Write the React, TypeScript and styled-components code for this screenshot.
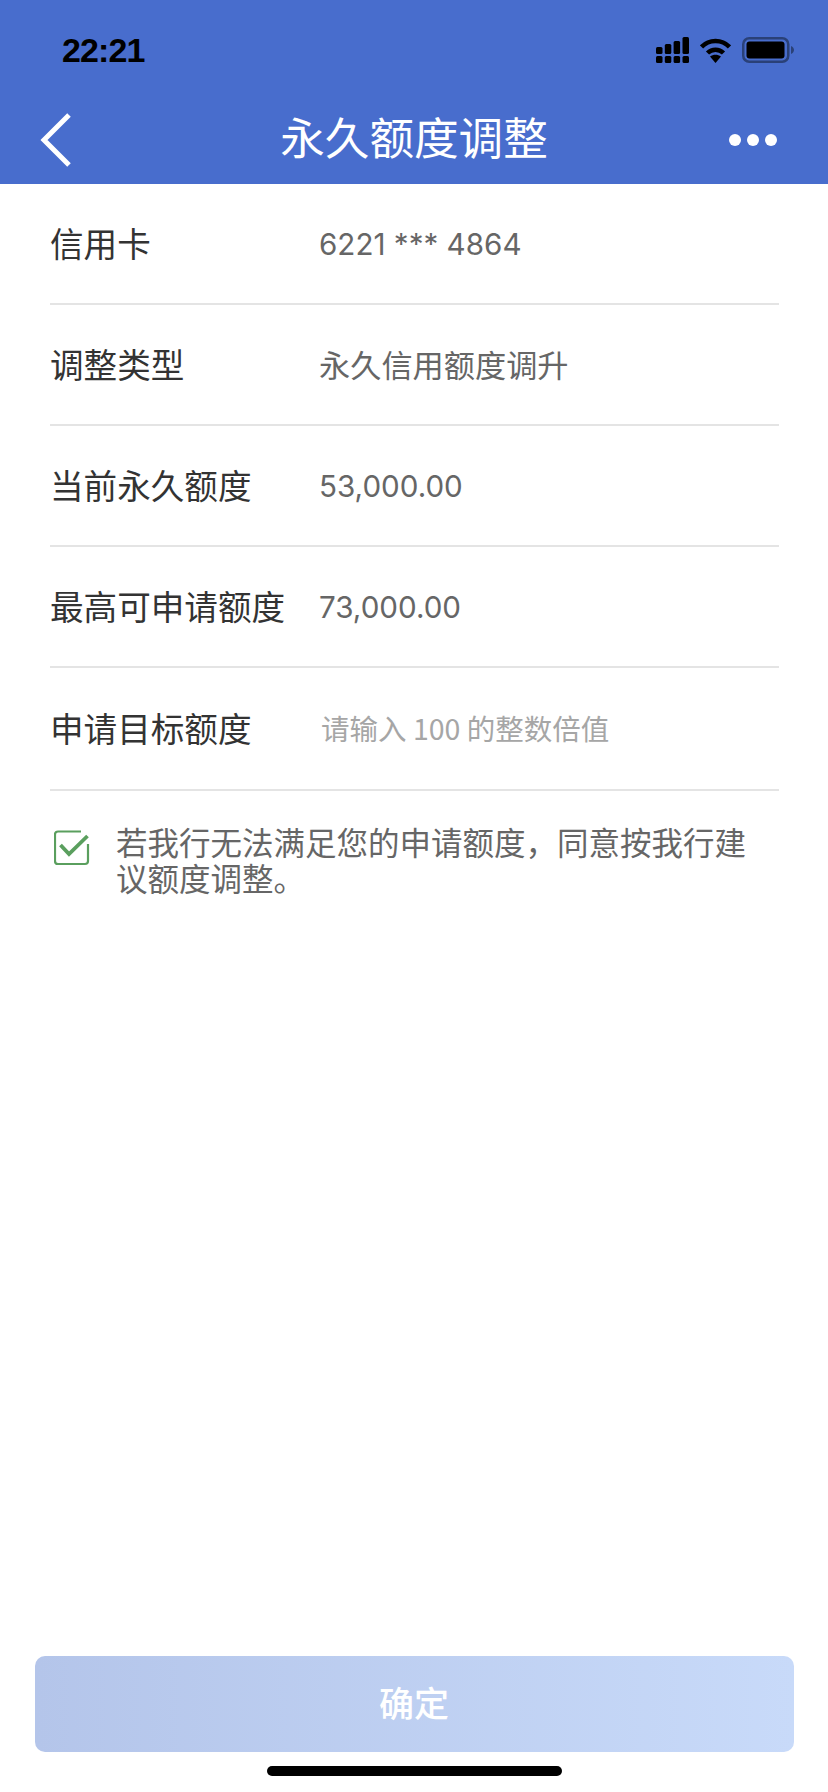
import styled, { createGlobalStyle } from 'styled-components';

const CJK = `"Noto Sans CJK SC", "Noto Sans", sans-serif`;

const GlobalStyle = createGlobalStyle`
    html, body {
        margin: 0;
        padding: 0;
        background: #ffffff;
    }
`;

const Page = styled.div`
    width: 828px;
    height: 1792px;
    display: flex;
    flex-direction: column;
    background: #ffffff;
    font-family: ${CJK};
    overflow: hidden;
`;

// Blue header with status bar and title
const Header = styled.header`
    height: 184px;
    flex-shrink: 0;
    display: flex;
    flex-direction: column;
    background: #486dcd;
`;

const StatusBar = styled.div`
    height: 50px;
    margin-top: 25px;
    display: flex;
    align-items: center;
    justify-content: space-between;
    padding: 0 34px 0 62px;
`;

const Clock = styled.span`
    font-family: "Liberation Sans", sans-serif;
    font-size: 34px;
    font-weight: 700;
    letter-spacing: -0.9px;
    color: #000000;
`;

const StatusIcons = styled.div`
    display: flex;
    align-items: center;
    gap: 11px;
`;

const NavBar = styled.div`
    flex: 1;
    display: grid;
    grid-template-columns: 1fr auto 1fr;
    align-items: center;
    padding: 20px 52px 0 40px;
`;

const BackIcon = styled.svg`
    display: block;
`;

const Title = styled.h1`
    margin: 0 0 8px 12px;
    font-size: 44.6px;
    font-weight: 400;
    line-height: 60px;
    color: #ffffff;
`;

const Dots = styled.div`
    display: flex;
    justify-content: flex-end;
    gap: 6px;
    margin-right: -1px;
`;

const Dot = styled.span`
    width: 12px;
    height: 12px;
    border-radius: 50%;
    background: #ffffff;
`;

const Form = styled.div`
    padding: 0 49px 0 50px;
`;

const Row = styled.div`
    height: 121px;
    box-sizing: border-box;
    display: flex;
    align-items: center;
    padding-bottom: 3px;
    border-bottom: 2px solid #e4e4e4;

    &:nth-child(5) {
        height: 123px;
    }
`;

const Label = styled.div`
    width: 269px;
    flex-shrink: 0;
    font-size: 33.6px;
    color: #333333;
    white-space: nowrap;
`;

const Value = styled.div<{ $kind?: string }>`
    font-family: ${(p) => (p.$kind === 'number' ? `Inter, ${CJK}` : CJK)};
    font-size: ${(p) => (p.$kind === 'number' ? '29.6px' : p.$kind === 'hint' ? '28.5px' : '31.2px')};
    color: ${(p) => (p.$kind === 'hint' ? '#a6a6a6' : '#666666')};
    margin-left: ${(p) => (p.$kind === 'hint' ? '2px' : '0')};
    padding-top: ${(p) => (p.$kind === 'number' ? '3px' : '0')};
    white-space: nowrap;
`;

const Agreement = styled.div`
    display: flex;
    align-items: flex-start;
    gap: 26px;
    padding: 32px 20px 0 4px;
`;

const AgreementText = styled.div`
    font-size: 31.5px;
    line-height: 36px;
    color: #666666;
`;

const CheckIcon = styled.svg`
    width: 36px;
    height: 36px;
    flex-shrink: 0;
    margin-top: 7px;
`;

const Footer = styled.div`
    margin-top: auto;
    display: flex;
    flex-direction: column;
    align-items: center;
`;

const ConfirmButton = styled.button`
    width: 759px;
    height: 96px;
    border: 0;
    border-radius: 10px;
    padding: 0 0 6px;
    background: linear-gradient(90deg, #b4c5ea 0%, #c8daf9 100%);
    font-family: ${CJK};
    font-size: 35px;
    font-weight: 500;
    color: #ffffff;
`;

const HomeBar = styled.div`
    width: 295px;
    height: 10px;
    margin: 14px 0 16px;
    border-radius: 5px;
    background: #000000;
`;

const rows = [
    { label: '信用卡', value: '6221 *** 4864', kind: 'number' },
    { label: '调整类型', value: '永久信用额度调升' },
    { label: '当前永久额度', value: '53,000.00', kind: 'number' },
    { label: '最高可申请额度', value: '73,000.00', kind: 'number' },
    { label: '申请目标额度', value: '请输入 100 的整数倍值', kind: 'hint' },
];

const App = () => {
    return (
        <Page>
            <GlobalStyle />
            <Header>
                <StatusBar>
                    <Clock>22:21</Clock>
                    <StatusIcons>
                        {/* Signal */}
                        <svg width="33" height="26" viewBox="0 0 33 26" fill="#000">
                            <rect x="0" y="10" width="6.5" height="7" rx="1.5" />
                            <rect x="8.8" y="7" width="6.5" height="10" rx="1.5" />
                            <rect x="17.6" y="4" width="6.5" height="13" rx="1.5" />
                            <rect x="26.5" y="0" width="6.5" height="17" rx="1.5" />
                            <rect x="0" y="19" width="6.5" height="7" rx="1.5" />
                            <rect x="8.8" y="19" width="6.5" height="7" rx="1.5" />
                            <rect x="17.6" y="19" width="6.5" height="7" rx="1.5" />
                            <rect x="26.5" y="19" width="6.5" height="7" rx="1.5" />
                        </svg>
                        {/* Wifi */}
                        <svg width="31" height="25" viewBox="0 0 31 25" fill="none" stroke="#000" strokeWidth="4.5">
                            <path d="M1.5 9 C9 1 22 1 29.5 9" />
                            <path d="M7.5 15 C12 10.5 19 10.5 23.5 15" />
                            <path d="M10 18.5 L15.5 25 L21 18.5 C17.5 16 13.5 16 10 18.5 Z" fill="#000" stroke="none" />
                        </svg>
                        {/* Battery */}
                        <svg width="52" height="26" viewBox="0 0 52 26">
                            <rect x="1.25" y="1.25" width="45" height="23.5" rx="6" fill="none" stroke="#2a4178" strokeWidth="2.5" />
                            <rect x="4.5" y="4.5" width="38" height="17" rx="3" fill="#000" />
                            <path d="M49 9 C51 10 52 11.5 52 13 C52 14.5 51 16 49 17 Z" fill="#2a4178" />
                        </svg>
                    </StatusIcons>
                </StatusBar>
                <NavBar>
                    <BackIcon width="32" height="54" viewBox="0 0 32 54" fill="none" stroke="#fff" strokeWidth="5">
                        <path d="M29 2 L4 27 L29 52" />
                    </BackIcon>
                    <Title>永久额度调整</Title>
                    <Dots>
                        <Dot />
                        <Dot />
                        <Dot />
                    </Dots>
                </NavBar>
            </Header>
            <Form>
                {rows.map((row) => (
                    <Row key={row.label}>
                        <Label>{row.label}</Label>
                        <Value $kind={row.kind}>{row.value}</Value>
                    </Row>
                ))}
                <Agreement>
                    <CheckIcon viewBox="0 0 36 36" fill="none">
                        <path d="M27 1.5 H4 Q1 1.5 1 4.5 V31 Q1 34 4 34 H31 Q34 34 34 31 V14" stroke="#5a9f5e" strokeWidth="2.2" />
                        <path d="M6.5 15 L15 24 L33.5 6" stroke="#5a9f5e" strokeWidth="3.8" />
                    </CheckIcon>
                    <AgreementText>若我行无法满足您的申请额度，同意按我行建议额度调整。</AgreementText>
                </Agreement>
            </Form>
            <Footer>
                <ConfirmButton>确定</ConfirmButton>
                <HomeBar />
            </Footer>
        </Page>
    );
};

export default App;
